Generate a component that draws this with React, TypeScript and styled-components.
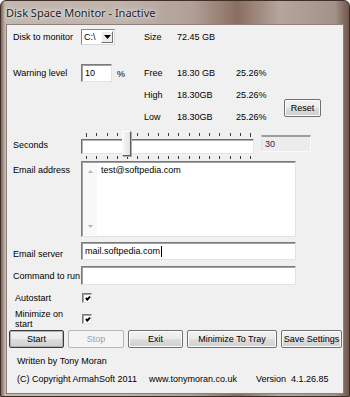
import styled, { createGlobalStyle } from "styled-components";

const GlobalStyle = createGlobalStyle`
  html, body {
    margin: 0;
    padding: 0;
    background: #ffffff;
  }
  * {
    box-sizing: border-box;
  }
`;

const TICKS = Array.from({ length: 17 }, (_, i) => i);

export default function App() {
  return (
    <>
      <GlobalStyle />
      <Window>
        <TitleBar>Disk Space Monitor - Inactive</TitleBar>
        <Client>
          <StatGrid $top={4} $rows="16px">
            <Label>Disk to monitor</Label>
            <Combo>
              <ComboText>C:\</ComboText>
              <ComboButton>
                <svg width="7" height="4" viewBox="0 0 7 4">
                  <path d="M0 0h7L3.5 4z" fill="#000" />
                </svg>
              </ComboButton>
            </Combo>
            <Text>Size</Text>
            <Text>72.45 GB</Text>
          </StatGrid>

          <StatGrid $top={17} $rows="22px 22px 22px">
            <Label>Warning level</Label>
            <Cell>
              <Field $w={31} $h={18}>10</Field>
              <Percent>%</Percent>
            </Cell>
            <Text>Free</Text>
            <Text>18.30 GB</Text>
            <Text>25.26%</Text>
            <Empty />

            <Empty />
            <Empty />
            <Text>High</Text>
            <Text>18.30GB</Text>
            <Text>25.26%</Text>
            <ResetButton>Reset</ResetButton>

            <Empty />
            <Empty />
            <Text>Low</Text>
            <Text>18.30GB</Text>
            <Text>25.26%</Text>
          </StatGrid>

          <SliderRow>
            <Label $pad={9}>Seconds</Label>
            <Slider>
              <Ticks>
                {TICKS.map((i) => (
                  <Tick key={i} $long={i === 0 || i === TICKS.length - 1} />
                ))}
              </Ticks>
              <Track />
              <Ticks>
                {TICKS.map((i) => (
                  <Tick key={i} $long={false} />
                ))}
              </Ticks>
              <Thumb style={{ left: 41 }} />
            </Slider>
            <ValueBox>30</ValueBox>
          </SliderRow>

          <FormRow $top={1} $align="flex-start">
            <Label $pad={4}>Email address</Label>
            <EmailBox>
              <ScrollBar>
                <svg width="5" height="3" viewBox="0 0 5 3">
                  <path d="M0 3h5L2.5 0z" fill="#b5b5b5" />
                </svg>
                <svg width="5" height="3" viewBox="0 0 5 3">
                  <path d="M0 0h5L2.5 3z" fill="#b5b5b5" />
                </svg>
              </ScrollBar>
              <EmailText>test@softpedia.com</EmailText>
            </EmailBox>
          </FormRow>

          <FormRow $top={5} $align="center">
            <Label $pad={5}>Email server</Label>
            <Field $w={215} $h={18}>
              mail.softpedia.com
              <Caret />
            </Field>
          </FormRow>

          <FormRow $top={6} $align="center">
            <Label $pad={1}>Command to run</Label>
            <Field $w={215} $h={19} />
          </FormRow>

          <FormRow $top={8} $align="center">
            <Label $indent={2}>Autostart</Label>
            <CheckBox>
              <CheckMark />
            </CheckBox>
          </FormRow>

          <FormRow $top={6} $align="center">
            <Label $indent={2} $narrow>
              Minimize on start
            </Label>
            <CheckBox>
              <CheckMark />
            </CheckBox>
          </FormRow>

          <ButtonRow>
            <Button $w={55} $focused>
              Start
            </Button>
            <Button $w={56} disabled>
              Stop
            </Button>
            <Button $w={55}>Exit</Button>
            <Button $w={90}>Minimize To Tray</Button>
            <Button $w={61}>Save Settings</Button>
          </ButtonRow>

          <Footer>
            <Text>Written by Tony Moran</Text>
            <CopyrightRow>
              <Text>(C) Copyright ArmahSoft 2011</Text>
              <Text>www.tonymoran.co.uk</Text>
              <Text>
                Version&nbsp;&nbsp;4.1.26.85
              </Text>
            </CopyrightRow>
          </Footer>
        </Client>
      </Window>
    </>
  );
}

/* ---------- window frame ---------- */

const Window = styled.div`
  width: 350px;
  height: 397px;
  display: flex;
  flex-direction: column;
  background: linear-gradient(
    90deg,
    #7d6357 0px,
    #c2b7b0 4px,
    #bfb3ab 35%,
    #b09f96 55%,
    #8a6e60 68%,
    #b5a59c 80%,
    #a39289 96%,
    #6e5548 100%
  );
  border: 1px solid #3f2f27;
  border-radius: 6px 6px 0 0;
  font-family: "Liberation Sans", Arial, sans-serif;
  font-size: 9px;
  color: #000;
`;

const TitleBar = styled.div`
  height: 23px;
  display: flex;
  align-items: center;
  padding-left: 5px;
  font-family: "Noto Sans", "Liberation Sans", sans-serif;
  font-size: 11px;
  color: #1b1b1b;
  text-shadow: 0 0 6px rgba(255, 255, 255, 0.9), 0 0 2px rgba(255, 255, 255, 0.8);
`;

const Client = styled.div`
  flex: 1;
  margin: 0 5px 2px 5px;
  background: #f0f0f0;
  border: 1px solid #8e8079;
  display: flex;
  flex-direction: column;
  padding-left: 6px;
`;

/* ---------- grids and rows ---------- */

const StatGrid = styled.div<{ $top: number; $rows: string }>`
  margin-top: ${(p) => p.$top}px;
  display: grid;
  grid-template-columns: 68px 63px 33px 59px 48px 37px;
  grid-template-rows: ${(p) => p.$rows};
  align-items: center;
`;

const Cell = styled.div`
  display: flex;
  align-items: center;
`;

const Empty = styled.div``;

const Label = styled.div<{ $pad?: number; $indent?: number; $narrow?: boolean }>`
  width: 68px;
  flex: none;
  padding-top: ${(p) => p.$pad ?? 0}px;
  padding-left: ${(p) => p.$indent ?? 0}px;
  padding-right: ${(p) => (p.$narrow ? 14 : 0)}px;
  line-height: 10px;
  white-space: ${(p) => (p.$narrow ? "normal" : "nowrap")};
`;

const Text = styled.span`
  white-space: nowrap;
  line-height: 10px;
`;

const Percent = styled.span`
  margin-left: 5px;
  margin-top: 1px;
`;

const FormRow = styled.div<{ $top: number; $align: string }>`
  margin-top: ${(p) => p.$top}px;
  display: flex;
  align-items: ${(p) => p.$align};
`;

/* ---------- controls ---------- */

const Combo = styled.div`
  width: 34px;
  height: 16px;
  display: flex;
  align-items: stretch;
  background: #fff;
  border: 1px solid;
  border-color: #828790 #d9d9d9 #d9d9d9 #828790;
  padding: 1px;
`;

const ComboText = styled.span`
  flex: 1;
  padding-left: 1px;
  line-height: 12px;
`;

const ComboButton = styled.span`
  width: 12px;
  display: flex;
  align-items: center;
  justify-content: center;
  background: #ececec;
  border: 1px solid;
  border-color: #fff #6f6f6f #6f6f6f #fff;
`;

const Field = styled.div<{ $w: number; $h: number }>`
  width: ${(p) => p.$w}px;
  height: ${(p) => p.$h}px;
  background: #fff;
  border: 1px solid;
  border-color: #7b7b7b #e3e3e3 #e3e3e3 #7b7b7b;
  box-shadow: inset 1px 1px 0 #a0a0a0;
  padding: 0 2px 0 3px;
  display: flex;
  align-items: center;
  line-height: 10px;
  white-space: nowrap;
`;

const Caret = styled.span`
  width: 1px;
  height: 11px;
  background: #000;
  margin-left: 1px;
`;

const ResetButton = styled.button`
  grid-column: 6;
  grid-row: 2 / 4;
  align-self: start;
  margin-top: 15px;
  width: 37px;
  height: 18px;
  padding: 0;
  font: inherit;
  color: #000;
  border: 1px solid #707070;
  border-radius: 2px;
  background: linear-gradient(#f2f2f2 0%, #ebebeb 48%, #dddddd 52%, #cfcfcf 100%);
  box-shadow: inset 0 0 0 1px #fcfcfc;
`;

/* ---------- slider ---------- */

const SliderRow = styled.div`
  margin-top: 3px;
  height: 29px;
  display: flex;
  align-items: flex-start;
`;

const Slider = styled.div`
  position: relative;
  width: 173px;
  height: 29px;
  display: flex;
  flex-direction: column;
`;

const Ticks = styled.div`
  margin-top: 2px;
  height: 4px;
  padding: 0 3px 0 5px;
  display: flex;
  justify-content: space-between;
  align-items: flex-start;
`;

const Tick = styled.span<{ $long: boolean }>`
  width: 1px;
  height: ${(p) => (p.$long ? 4 : 3)}px;
  background: #3a3a3a;
`;

const Track = styled.div`
  margin-top: 2px;
  height: 15px;
  background: #fff;
  border: 1px solid;
  border-color: #6d6d6d #e6e6e6 #e6e6e6 #6d6d6d;
  box-shadow: inset 1px 1px 0 #b4b4b4;
`;

const Thumb = styled.div`
  position: absolute;
  top: 0;
  width: 9px;
  height: 25px;
  background: linear-gradient(90deg, #f6f6f6, #e2e2e2);
  border: 1px solid;
  border-color: #fdfdfd #5e5e5e #5e5e5e #fdfdfd;
  box-shadow: 1px 1px 0 #a8a8a8;
`;

const ValueBox = styled.div`
  margin: 4px 0 0 7px;
  width: 50px;
  height: 17px;
  border-top: 2px solid #9d9d9d;
  border-left: 1px solid #e4e4e4;
  border-right: 1px solid #fafafa;
  border-bottom: 1px solid #fafafa;
  background: #ececec;
  padding: 2px 0 0 3px;
  line-height: 10px;
  color: #1d2b4a;
`;

/* ---------- email box ---------- */

const EmailBox = styled.div`
  width: 215px;
  height: 76px;
  display: flex;
  background: #fff;
  border: 1px solid;
  border-color: #7b7b7b #e3e3e3 #e3e3e3 #7b7b7b;
  box-shadow: inset 1px 1px 0 #a0a0a0;
`;

const ScrollBar = styled.div`
  width: 14px;
  margin: 1px 0 1px 1px;
  background: #f8f8f8;
  display: flex;
  flex-direction: column;
  justify-content: space-between;
  align-items: center;
  padding: 7px 0 7px;
`;

const EmailText = styled.div`
  padding: 3px 0 0 4px;
  line-height: 10px;
`;

/* ---------- checkboxes ---------- */

const CheckBox = styled.div`
  width: 10px;
  height: 10px;
  margin-left: 1px;
  background: #fff;
  border: 1px solid;
  border-color: #777 #e6e6e6 #e6e6e6 #777;
  box-shadow: inset 1px 1px 0 #a5a5a5;
  display: flex;
  align-items: center;
  justify-content: center;
`;

const CheckMark = styled.span`
  width: 5px;
  height: 3px;
  border-left: 2px solid #000;
  border-bottom: 2px solid #000;
  transform: translate(0.5px, -0.5px) rotate(-45deg);
`;

/* ---------- buttons ---------- */

const ButtonRow = styled.div`
  margin: 1px 0 0 -4px;
  display: flex;
  gap: 4px;
`;

const Button = styled.button<{ $w: number; $focused?: boolean }>`
  width: ${(p) => p.$w}px;
  height: 18px;
  padding: 0;
  font: inherit;
  color: #000;
  white-space: nowrap;
  border: 1px solid ${(p) => (p.$focused ? "#3c3c3c" : "#707070")};
  border-radius: 2px;
  background: linear-gradient(#f2f2f2 0%, #ebebeb 48%, #dddddd 52%, #cfcfcf 100%);
  box-shadow: inset 0 0 0 1px ${(p) => (p.$focused ? "#b0b0b0" : "#fcfcfc")};

  &:disabled {
    color: #a3a3a3;
    border-color: #b8b8b8;
    background: #f4f4f4;
    box-shadow: none;
  }
`;

/* ---------- footer ---------- */

const Footer = styled.div`
  margin-top: 8px;
  padding-left: 4px;
  display: flex;
  flex-direction: column;
  gap: 8px;
`;

const CopyrightRow = styled.div`
  display: grid;
  grid-template-columns: 132px 107px auto;
`;
